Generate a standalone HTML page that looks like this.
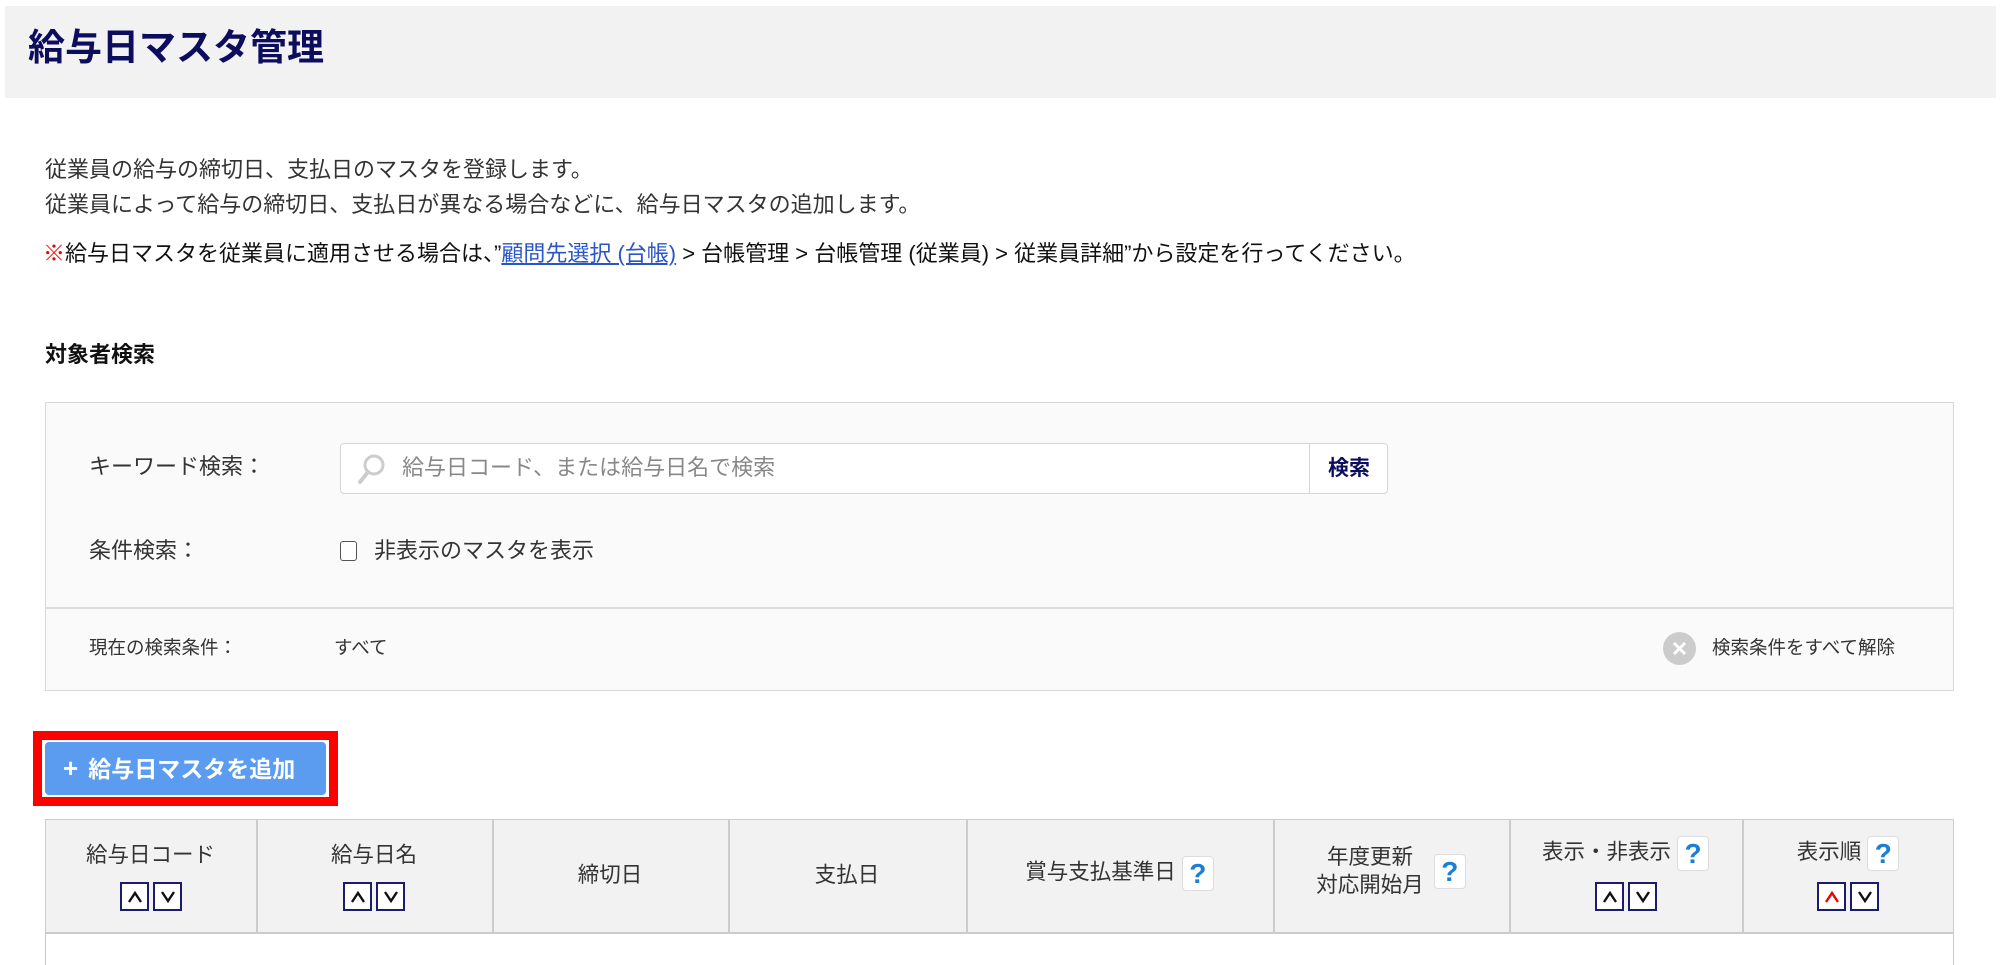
<!DOCTYPE html>
<html style="width:2000px;height:965px;overflow:hidden"><head><meta charset="utf-8"><style>
*{margin:0;padding:0;box-sizing:border-box}
body{width:2000px;height:965px;background:#fff;position:relative;overflow:hidden;font-family:"Liberation Sans","Noto Sans CJK JP",sans-serif;color:#333}
.a{position:absolute;white-space:nowrap}
.hdr{left:5px;top:6px;width:1991px;height:92px;background:#f2f2f2}
.title{left:28px;top:25px;font-size:37px;font-weight:bold;color:#0d0d5e;line-height:46px}
.t{font-size:22px;line-height:28px}
.panel{left:45px;top:402px;width:1909px;height:289px;background:#fafafa;border:1.5px solid #d8d8d8}
.div{left:45px;top:607px;width:1909px;height:2px;background:#dedede}
.inp{left:340px;top:443px;width:1048px;height:51px;background:#fff;border:1.5px solid #d5d5d5;border-radius:4px}
.sbtn{left:1309px;top:443px;width:79px;height:51px;border-left:1.5px solid #d5d5d5;font-size:21px;font-weight:bold;color:#0d0d5e;text-align:center;line-height:51px}
.cb{left:340px;top:541px;width:17px;height:20px;border:1.5px solid #555;border-radius:3px;background:#fff}
.red{left:33px;top:731px;width:305px;height:75px;border:9px solid #f00}
.btn{left:45px;top:742px;width:281px;height:53px;background:#5b9cf0;border-radius:4px;color:#fff;font-weight:bold;font-size:23px;line-height:53px;padding-left:18px}
.tbl{left:45px;top:819px;width:1909px;height:146px;border:1.5px solid #ccc;border-bottom:none}
.th{left:45px;top:819px;width:1909px;height:115px;background:#f2f2f2;border:1.5px solid #ccc;border-bottom:2px solid #ccc}
.vl{top:819px;width:1.5px;height:115px;background:#ccc}
.h{font-size:21.5px;line-height:28px;text-align:center}
.sb{width:29px;height:29px;border:2px solid #1c1c6e;background:#fff;display:inline-block;margin:0 2px;vertical-align:middle;position:relative}
.sb svg{position:absolute;left:6px;top:7px}
.q{display:inline-block;width:32px;height:35px;border:1.5px solid #ddd;border-radius:4px;background:#fff;color:#1c7fd6;font-weight:bold;font-size:28px;line-height:33px;text-align:center;vertical-align:middle;margin-left:6px}
</style></head><body>
<div class="a hdr"></div>
<div class="a title">給与日マスタ管理</div>
<div class="a t" style="left:45px;top:156px">従業員の給与の締切日、支払日のマスタを登録します。</div>
<div class="a t" style="left:45px;top:191px">従業員によって給与の締切日、支払日が異なる場合などに、給与日マスタの追加します。</div>
<div class="a t" style="left:43px;top:240px;color:#111"><span style="color:#e00">※</span>給与日マスタを従業員に適用させる場合は、”<span style="color:#2a55c8;text-decoration:underline">顧問先選択 (台帳)</span> &gt; 台帳管理 &gt; 台帳管理 (従業員) &gt; 従業員詳細”から設定を行ってください。</div>
<div class="a t" style="left:45px;top:341px;font-weight:bold;color:#111">対象者検索</div>
<div class="a panel"></div>
<div class="a div"></div>
<div class="a t" style="left:89px;top:453px">キーワード検索：</div>
<div class="a inp"></div>
<svg class="a" style="left:356px;top:453px" width="30" height="32" viewBox="0 0 30 32"><circle cx="18" cy="12" r="9" fill="none" stroke="#ccc" stroke-width="3"/><line x1="12" y1="19" x2="4" y2="29" stroke="#ccc" stroke-width="4" stroke-linecap="round"/></svg>
<div class="a t" style="left:402px;top:454px;color:#888">給与日コード、または給与日名で検索</div>
<div class="a sbtn">検索</div>
<div class="a t" style="left:89px;top:537px">条件検索：</div>
<div class="a cb"></div>
<div class="a t" style="left:374px;top:537px">非表示のマスタを表示</div>
<div class="a" style="left:89px;top:636px;font-size:18.5px;line-height:24px">現在の検索条件：</div>
<div class="a" style="left:334px;top:636px;font-size:18.5px;line-height:24px">すべて</div>
<div class="a" style="left:1663px;top:632px;width:33px;height:33px;border-radius:50%;background:#ccc"></div>
<svg class="a" style="left:1663px;top:632px" width="33" height="33"><path d="M11 11L22 22M22 11L11 22" stroke="#fff" stroke-width="3"/></svg>
<div class="a" style="left:1712px;top:636px;font-size:18.5px;line-height:24px">検索条件をすべて解除</div>
<div class="a red"></div>
<div class="a btn"><span style="font-size:26px;margin-right:10px">+</span>給与日マスタを追加</div>
<div class="a tbl"></div>
<div class="a th"></div>
<div class="a vl" style="left:256px"></div>
<div class="a vl" style="left:492px"></div>
<div class="a vl" style="left:728px"></div>
<div class="a vl" style="left:966px"></div>
<div class="a vl" style="left:1273px"></div>
<div class="a vl" style="left:1509px"></div>
<div class="a vl" style="left:1742px"></div>

<div class="a h" style="left:45px;width:211px;top:841px">給与日コード</div>
<div class="a" style="left:45px;width:211px;top:882px;text-align:center;font-size:0"><span class="sb"><svg width="14" height="12"><path d="M1 11L7 2L13 11" fill="none" stroke="#111" stroke-width="2.4"/></svg></span><span class="sb"><svg width="14" height="12"><path d="M1 1L7 10L13 1" fill="none" stroke="#111" stroke-width="2.4"/></svg></span></div>
<div class="a h" style="left:256px;width:236px;top:841px">給与日名</div>
<div class="a" style="left:256px;width:236px;top:882px;text-align:center;font-size:0"><span class="sb"><svg width="14" height="12"><path d="M1 11L7 2L13 11" fill="none" stroke="#111" stroke-width="2.4"/></svg></span><span class="sb"><svg width="14" height="12"><path d="M1 1L7 10L13 1" fill="none" stroke="#111" stroke-width="2.4"/></svg></span></div>
<div class="a h" style="left:492px;width:236px;top:861px">締切日</div>
<div class="a h" style="left:728px;width:238px;top:861px">支払日</div>
<div class="a h" style="left:966px;width:307px;top:856px">賞与支払基準日<span class="q">?</span></div>
<div class="a" style="left:1273px;width:236px;top:843px;display:flex;justify-content:center;align-items:center"><div class="h">年度更新<br>対応開始月</div><span class="q" style="margin-left:10px">?</span></div>
<div class="a h" style="left:1509px;width:233px;top:836px">表示・非表示<span class="q">?</span></div>
<div class="a" style="left:1509px;width:233px;top:882px;text-align:center;font-size:0"><span class="sb"><svg width="14" height="12"><path d="M1 11L7 2L13 11" fill="none" stroke="#111" stroke-width="2.4"/></svg></span><span class="sb"><svg width="14" height="12"><path d="M1 1L7 10L13 1" fill="none" stroke="#111" stroke-width="2.4"/></svg></span></div>
<div class="a h" style="left:1742px;width:212px;top:836px">表示順<span class="q">?</span></div>
<div class="a" style="left:1742px;width:212px;top:882px;text-align:center;font-size:0"><span class="sb"><svg width="14" height="12"><path d="M1 11L7 2L13 11" fill="none" stroke="#e00" stroke-width="2.4"/></svg></span><span class="sb"><svg width="14" height="12"><path d="M1 1L7 10L13 1" fill="none" stroke="#111" stroke-width="2.4"/></svg></span></div>
</body></html>
